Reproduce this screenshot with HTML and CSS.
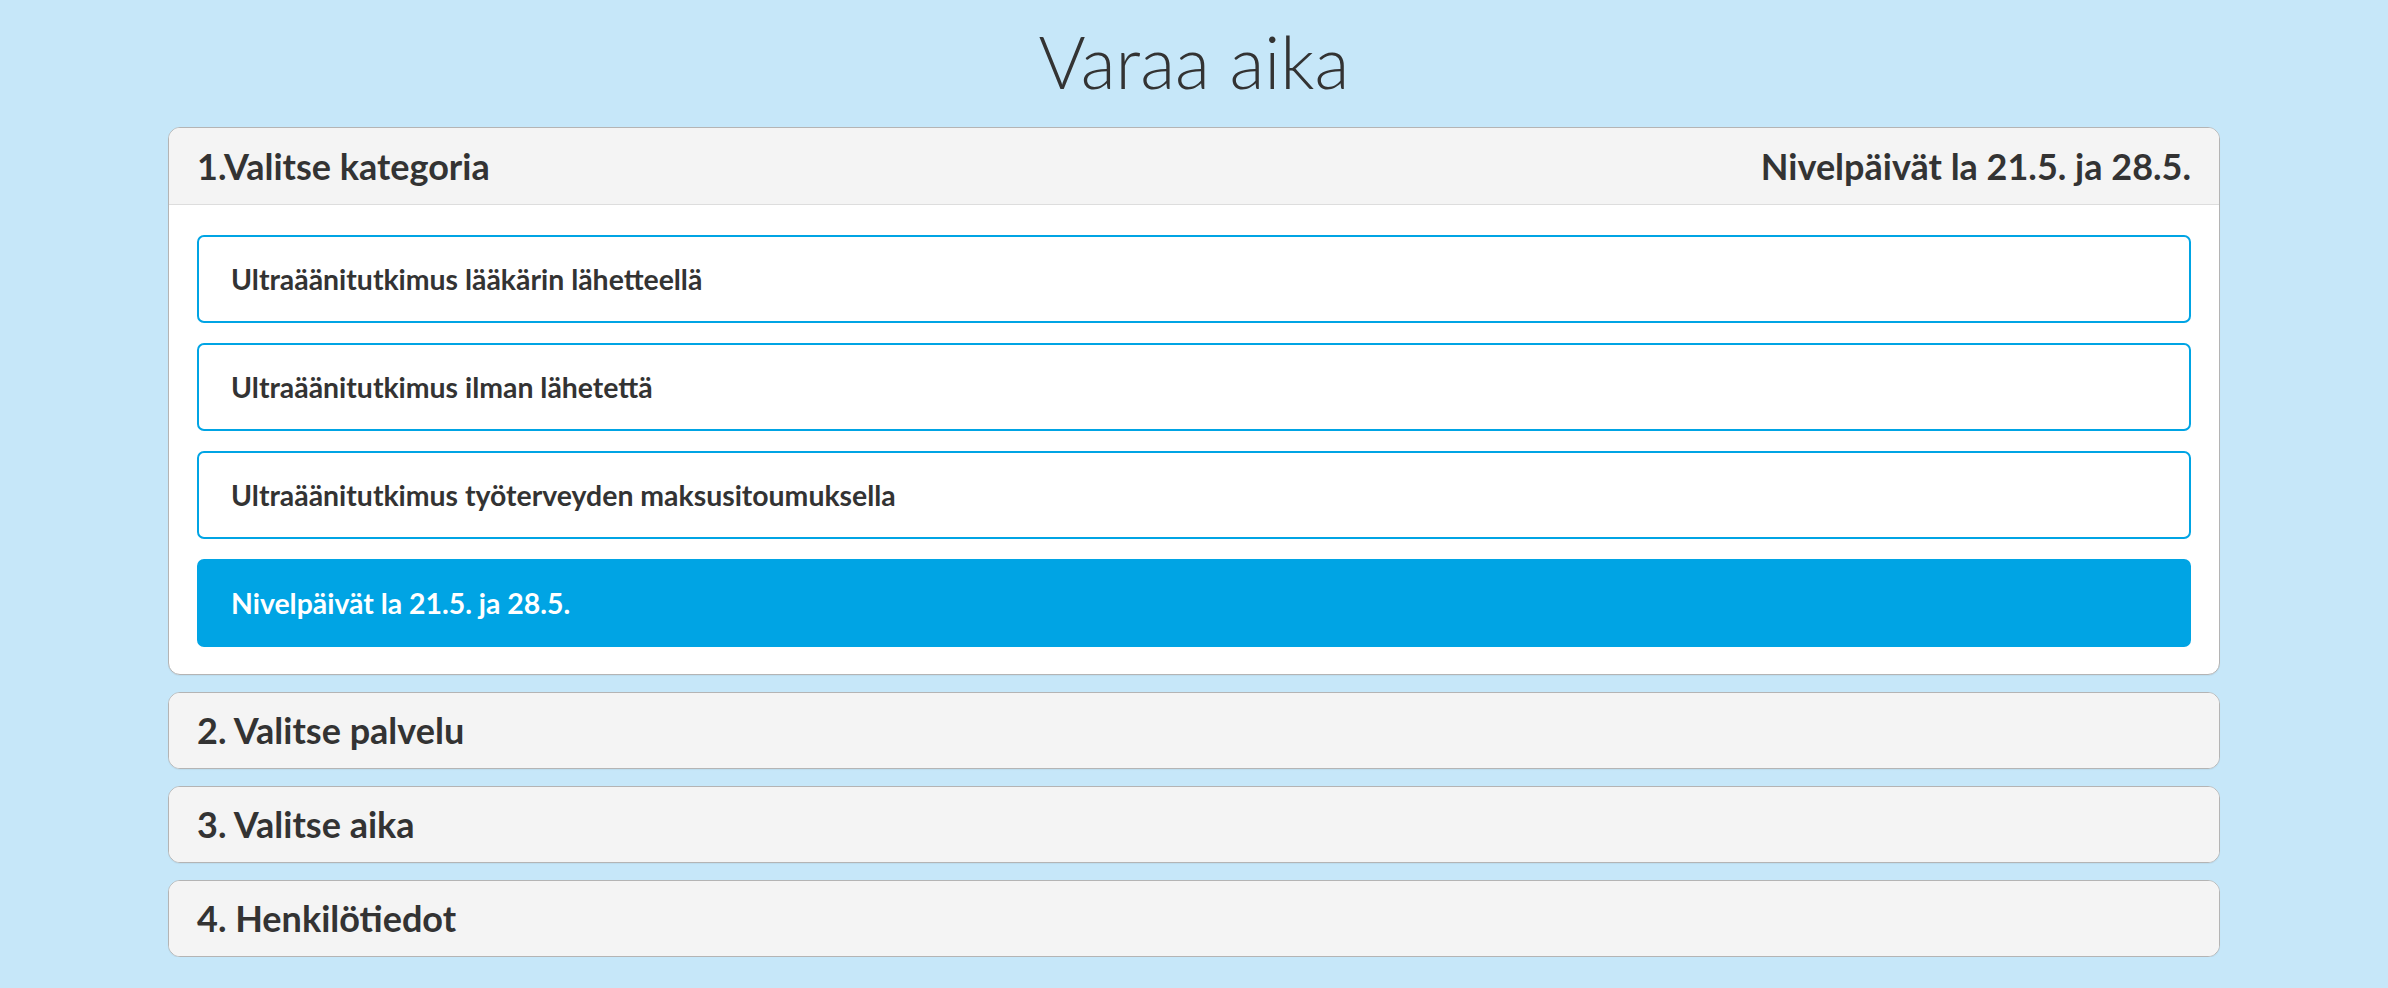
FILE: index.html
```html
<!DOCTYPE html>
<html lang="fi">
<head>
<meta charset="utf-8">
<title>Varaa aika</title>
<link rel="stylesheet" href="styles.css">
</head>
<body>
<main class="page">
  <h1 class="page-title">Varaa aika</h1>
  <section class="panel">
    <header class="panel-heading">
      <span class="panel-title">1.Valitse kategoria</span>
      <span class="panel-title">Nivelpäivät la 21.5. ja 28.5.</span>
    </header>
    <div class="panel-body">
      <button class="option">Ultraäänitutkimus lääkärin lähetteellä</button>
      <button class="option">Ultraäänitutkimus ilman lähetettä</button>
      <button class="option">Ultraäänitutkimus työterveyden maksusitoumuksella</button>
      <button class="option option-active">Nivelpäivät la 21.5. ja 28.5.</button>
    </div>
  </section>
  <section class="panel">
    <header class="panel-heading panel-heading-collapsed">
      <span class="panel-title">2. Valitse palvelu</span>
    </header>
  </section>
  <section class="panel">
    <header class="panel-heading panel-heading-collapsed">
      <span class="panel-title">3. Valitse aika</span>
    </header>
  </section>
  <section class="panel">
    <header class="panel-heading panel-heading-collapsed">
      <span class="panel-title">4. Henkilötiedot</span>
    </header>
  </section>
</main>
</body>
</html>
```

FILE: styles.css
```css
* {
  box-sizing: border-box;
}

html,
body {
  margin: 0;
  padding: 0;
}

body {
  background: #c6e7f9;
  font-family: Lato, "Open Sans", "Liberation Sans", sans-serif;
  color: #333333;
}

.page {
  width: 2052px;
  margin: 0 auto;
  display: flex;
  flex-direction: column;
  gap: 17px;
}

.page-title {
  margin: 22px 0 9px;
  font-size: 72px;
  font-weight: 300;
  line-height: 79px;
  text-align: center;
  color: #333333;
}

.panel {
  background: #ffffff;
  border: 1px solid #b4b4b4;
  border-radius: 12px;
  overflow: hidden;
  box-shadow: 0 1px 1px rgba(0, 0, 0, 0.05);
}

.panel-heading {
  display: flex;
  justify-content: space-between;
  align-items: center;
  height: 77px;
  padding: 0 28px;
  background: #f4f4f4;
  border-bottom: 1px solid #dddddd;
}

.panel-heading-collapsed {
  height: 75px;
  border-bottom: 0;
}

.panel-title {
  font-size: 36px;
  font-weight: 700;
  line-height: 75px;
  color: #333333;
}

.panel-body {
  display: flex;
  flex-direction: column;
  gap: 20px;
  padding: 30px 28px 27px;
}

.option {
  display: block;
  width: 100%;
  height: 88px;
  padding: 0 32px;
  border: 2px solid #00a4e4;
  border-radius: 7px;
  background: #ffffff;
  font-family: inherit;
  font-size: 28.4px;
  font-weight: 700;
  line-height: 84px;
  color: #333333;
  text-align: left;
  cursor: pointer;
}

.option-active {
  background: #00a4e4;
  color: #ffffff;
}
```
